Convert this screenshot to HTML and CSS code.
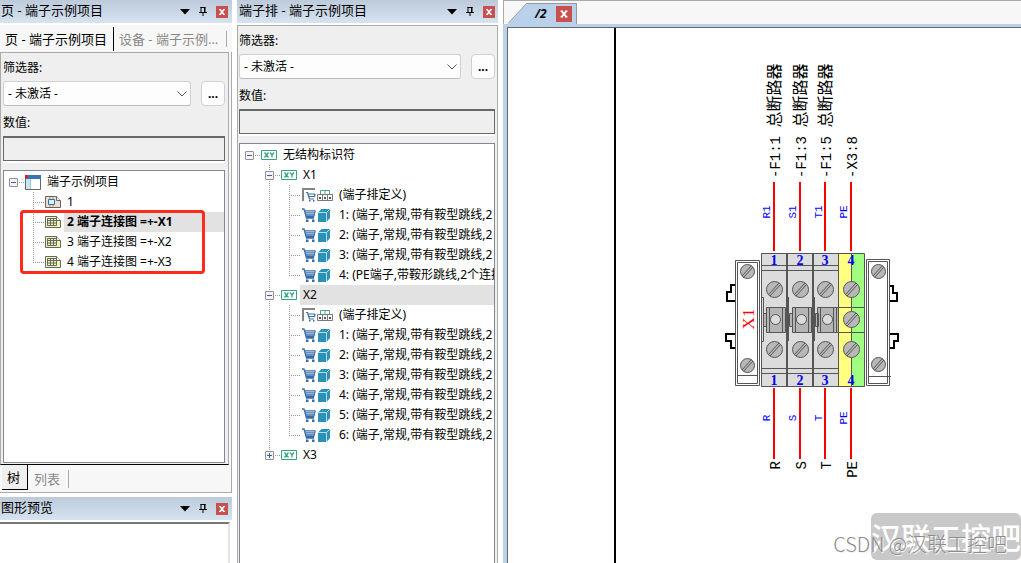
FILE: index.html
```html
<!DOCTYPE html>
<html lang="zh-CN">
<head>
<meta charset="utf-8">
<title>端子示例项目</title>
<link rel="stylesheet" href="styles.css">
</head>
<body>
<svg class="defs" aria-hidden="true">
  <symbol id="down" viewBox="0 0 10 6"><path d="M0 0h10L5 5.500z"/></symbol>
  <symbol id="pin" viewBox="0 0 8 9"><path d="M2 0v5M1.500 .500h5M0 5.500h8M4 6v3" fill="none" stroke="#000"/><path d="M5 0h1.500v5H5z"/></symbol>
  <symbol id="cross" viewBox="0 0 12 12"><path d="M4 3.500l4 5M8 3.500l-4 5" stroke="#fff" stroke-width="1.500"/><path d="M3 3.500h2M7 3.500h2M3 8.500h2M7 8.500h2" stroke="#fff"/></symbol>
  <symbol id="chev" viewBox="0 0 10 6"><path d="M.500 .500L5 5l4.500-4.500" fill="none" stroke="#555"/></symbol>
  <symbol id="project" viewBox="0 0 16 16"><path d="M.500 2.500h15v13H.500z" fill="#fff" stroke="#666"/><path d="M1 5h4v10H1z" fill="#cbe6f3"/><path d="M5.500 5v10" stroke="#9cc"/><path d="M0 1h16v4H0z" fill="#3577b5"/><path d="M0 1h3v3H0z" fill="#e81c1c"/></symbol>
  <symbol id="page" viewBox="0 0 16 12"><path d="M.500 .500h11l4 4v7H.500z" fill="#f1ddd0" stroke="#666"/><path d="M11.500 .500v4h4" fill="#fff" stroke="#666"/><path d="M3.500 3.500h6v5h-6z" fill="#d9effa" stroke="#1779b8"/><path d="M5 1v2M8 1v2M5 9v2M8 9v2" stroke="#e08540"/></symbol>
  <symbol id="diagram" viewBox="0 0 16 12"><path d="M.500 .500h11l4 4v7H.500z" fill="#f0f6b0" stroke="#666"/><path d="M11.500 .500v4h4" fill="#fff" stroke="#666"/><path d="M2.500 2.500h9v7h-9zM2.500 4.500h9M2.500 7h9M5.500 2.500v7M8.500 2.500v7" fill="none" stroke="#666"/></symbol>
  <symbol id="xy" viewBox="0 0 16 10"><path d="M.500 .500h15v9H.500z" fill="#fff" stroke="#36a57b"/><path d="M3.500 2.500l4 5M7.500 2.500l-4 5M9 2.500l2 2.500 2-2.500M11 5v2.500" fill="none" stroke="#36a57b" stroke-width="1.300"/></symbol>
  <symbol id="cart" viewBox="0 0 14 14"><path d="M0 1h2l2.500 9H12M2.500 2.800H13.500M3 4.800h10M3.600 6.800h8.800M4 8.500h8" fill="none" stroke="#386ca9" stroke-width="1.300"/><path d="M4 11.500h2.500V14H4zM10 11.500h2.500V14H10z" fill="#386ca9"/><path d="M13.200 3L12 8.500" stroke="#386ca9"/></symbol>
  <symbol id="cartdef" viewBox="0 0 14 14"><path d="M13 1H1v12" fill="none" stroke="#858585" stroke-width="2"/><path d="M4 4.500h1.500l2 6.500H12M6 6h7M6.500 8.500h6M13 6l-.500 3" fill="none" stroke="#386ca9" stroke-width="1.200"/><path d="M7 12h1.500v1.500H7zM11 12h1.500v1.500H11z" fill="#386ca9"/></symbol>
  <symbol id="strip" viewBox="0 0 16 12"><path d="M3.500 5V1.500h9V5M8 1v4" fill="none" stroke="#45ad7f"/><path d="M.500 5.500h15v6H.500zM5.500 5v6M10.500 5v6" fill="#fff" stroke="#777"/><path d="M2 8h2v2H2zM7 8h2v2H7zM12 8h2v2h-2z" fill="#555"/></symbol>
  <symbol id="cube" viewBox="0 0 12 13"><path d="M0 3.500L3.500 0H12v9l-3.500 4H0z" fill="#2b91b8"/><path d="M0 3.500h8.500V13M8.500 3.500L12 0" fill="none" stroke="#b5deec"/></symbol>
</svg>

<main class="app">
  <div class="side">
    <section class="dock">
      <header class="titlebar"><h2>页 - 端子示例项目</h2>
        <button class="tool" aria-label="菜单"><svg width="10" height="6"><use href="#down"/></svg></button>
        <button class="tool" aria-label="固定"><svg width="8" height="9"><use href="#pin"/></svg></button>
        <button class="close" aria-label="关闭"><svg width="12" height="12"><use href="#cross"/></svg></button>
      </header>
      <nav class="tabs"><button class="tab active">页 - 端子示例项目</button><button class="tab">设备 - 端子示例...</button></nav>
      <div class="frame">
        <div class="panel">
          <label for="filter1">筛选器:</label>
          <div class="filter"><span class="combo"><select id="filter1"><option>- 未激活 -</option></select><svg width="10" height="6"><use href="#chev"/></svg></span><button class="more">...</button></div>
          <label for="value1">数值:</label>
          <input class="value" id="value1" type="text">
          <ul class="tree">
            <li class="row"><span class="cell h"><button class="exp" aria-label="折叠"></button></span><svg class="icon" width="16" height="16"><use href="#project"/></svg><span class="name">端子示例项目</span></li>
            <li class="row"><span class="cell"></span><span class="cell v h"></span><svg class="icon" width="16" height="12"><use href="#page"/></svg><span class="name">1</span></li>
            <li class="group"><ul>
              <li class="row"><span class="cell"></span><span class="cell v h"></span><svg class="icon" width="16" height="12"><use href="#diagram"/></svg><span class="name picked current">2 端子连接图 =+-X1</span></li>
              <li class="row"><span class="cell"></span><span class="cell v h"></span><svg class="icon" width="16" height="12"><use href="#diagram"/></svg><span class="name">3 端子连接图 =+-X2</span></li>
              <li class="row"><span class="cell"></span><span class="cell end h"></span><svg class="icon" width="16" height="12"><use href="#diagram"/></svg><span class="name">4 端子连接图 =+-X3</span></li>
            </ul><div class="mark"></div></li>
          </ul>
        </div>
        <nav class="views"><button class="view active">树</button><button class="view">列表</button></nav>
      </div>
    </section>
    <section class="preview">
      <header class="titlebar"><h2>图形预览</h2>
        <button class="tool" aria-label="菜单"><svg width="10" height="6"><use href="#down"/></svg></button>
        <button class="tool" aria-label="固定"><svg width="8" height="9"><use href="#pin"/></svg></button>
        <button class="close" aria-label="关闭"><svg width="12" height="12"><use href="#cross"/></svg></button>
      </header>
      <div class="thumb"></div>
    </section>
  </div>

  <section class="middle">
    <header class="titlebar"><h2>端子排 - 端子示例项目</h2>
      <button class="tool" aria-label="菜单"><svg width="10" height="6"><use href="#down"/></svg></button>
      <button class="tool" aria-label="固定"><svg width="8" height="9"><use href="#pin"/></svg></button>
      <button class="close" aria-label="关闭"><svg width="12" height="12"><use href="#cross"/></svg></button>
    </header>
    <div class="panel">
      <label for="filter2">筛选器:</label>
      <div class="filter"><span class="combo"><select id="filter2"><option>- 未激活 -</option></select><svg width="10" height="6"><use href="#chev"/></svg></span><button class="more">...</button></div>
      <label for="value2">数值:</label>
      <input class="value" id="value2" type="text">
      <ul class="tree">
        <li class="row"><span class="cell h"><button class="exp" aria-label="折叠"></button></span><svg class="icon" width="16" height="10"><use href="#xy"/></svg><span class="name">无结构标识符</span></li>
        <li class="row"><span class="cell"></span><span class="cell v h"><button class="exp" aria-label="折叠"></button></span><svg class="icon" width="16" height="10"><use href="#xy"/></svg><span class="name">X1</span></li>
        <li class="row"><span class="cell"></span><span class="cell v"></span><span class="cell v h"></span><svg class="part" width="14" height="14"><use href="#cartdef"/></svg><svg class="kind" width="16" height="12"><use href="#strip"/></svg><span class="name">(端子排定义)</span></li>
        <li class="row"><span class="cell"></span><span class="cell v"></span><span class="cell v h"></span><svg class="part" width="14" height="14"><use href="#cart"/></svg><svg class="kind cube" width="12" height="13"><use href="#cube"/></svg><span class="name">1: (端子,常规,带有鞍型跳线,2</span></li>
        <li class="row"><span class="cell"></span><span class="cell v"></span><span class="cell v h"></span><svg class="part" width="14" height="14"><use href="#cart"/></svg><svg class="kind cube" width="12" height="13"><use href="#cube"/></svg><span class="name">2: (端子,常规,带有鞍型跳线,2</span></li>
        <li class="row"><span class="cell"></span><span class="cell v"></span><span class="cell v h"></span><svg class="part" width="14" height="14"><use href="#cart"/></svg><svg class="kind cube" width="12" height="13"><use href="#cube"/></svg><span class="name">3: (端子,常规,带有鞍型跳线,2</span></li>
        <li class="row"><span class="cell"></span><span class="cell v"></span><span class="cell end h"></span><svg class="part" width="14" height="14"><use href="#cart"/></svg><svg class="kind cube" width="12" height="13"><use href="#cube"/></svg><span class="name">4: (PE端子,带鞍形跳线,2个连接</span></li>
        <li class="row"><span class="cell"></span><span class="cell v h"><button class="exp" aria-label="折叠"></button></span><svg class="icon" width="16" height="10"><use href="#xy"/></svg><span class="name picked">X2</span></li>
        <li class="row"><span class="cell"></span><span class="cell v"></span><span class="cell v h"></span><svg class="part" width="14" height="14"><use href="#cartdef"/></svg><svg class="kind" width="16" height="12"><use href="#strip"/></svg><span class="name">(端子排定义)</span></li>
        <li class="row"><span class="cell"></span><span class="cell v"></span><span class="cell v h"></span><svg class="part" width="14" height="14"><use href="#cart"/></svg><svg class="kind cube" width="12" height="13"><use href="#cube"/></svg><span class="name">1: (端子,常规,带有鞍型跳线,2</span></li>
        <li class="row"><span class="cell"></span><span class="cell v"></span><span class="cell v h"></span><svg class="part" width="14" height="14"><use href="#cart"/></svg><svg class="kind cube" width="12" height="13"><use href="#cube"/></svg><span class="name">2: (端子,常规,带有鞍型跳线,2</span></li>
        <li class="row"><span class="cell"></span><span class="cell v"></span><span class="cell v h"></span><svg class="part" width="14" height="14"><use href="#cart"/></svg><svg class="kind cube" width="12" height="13"><use href="#cube"/></svg><span class="name">3: (端子,常规,带有鞍型跳线,2</span></li>
        <li class="row"><span class="cell"></span><span class="cell v"></span><span class="cell v h"></span><svg class="part" width="14" height="14"><use href="#cart"/></svg><svg class="kind cube" width="12" height="13"><use href="#cube"/></svg><span class="name">4: (端子,常规,带有鞍型跳线,2</span></li>
        <li class="row"><span class="cell"></span><span class="cell v"></span><span class="cell v h"></span><svg class="part" width="14" height="14"><use href="#cart"/></svg><svg class="kind cube" width="12" height="13"><use href="#cube"/></svg><span class="name">5: (端子,常规,带有鞍型跳线,2</span></li>
        <li class="row"><span class="cell"></span><span class="cell v"></span><span class="cell end h"></span><svg class="part" width="14" height="14"><use href="#cart"/></svg><svg class="kind cube" width="12" height="13"><use href="#cube"/></svg><span class="name">6: (端子,常规,带有鞍型跳线,2</span></li>
        <li class="row"><span class="cell"></span><span class="cell end h"><button class="exp plus" aria-label="展开"></button></span><svg class="icon" width="16" height="10"><use href="#xy"/></svg><span class="name">X3</span></li>
      </ul>
    </div>
  </section>

  <section class="editor">
    <nav class="doctabs">
      <div class="doctab">
        <svg class="slope" width="20" height="21" viewBox="0 0 20 21"><path d="M0 21L19 .500h1V21z" fill="#b9d1ea"/><path d="M0 20.500L18.500 .500H20" fill="none" stroke="#999"/></svg>
        <button class="doc">/2</button><button class="close big" aria-label="关闭"><svg width="14" height="14" viewBox="0 0 12 12"><use href="#cross"/></svg></button>
      </div>
    </nav>
    <div class="canvas">
      <svg class="drawing" width="513" height="535" viewBox="508 28 513 535" role="img" aria-label="端子连接图">
        <defs>
          <g id="screw"><circle r="8" fill="#b8b8b8" stroke="#555"/><path d="M-6 5L4.500-6.500M-4.500 6.500L6-5" stroke="#555"/></g>
          <g id="bolt"><circle r="7" fill="#b8b8b8" stroke="#555"/><path d="M-5.500 4.500L4-6M-4 6L5.500-4.500" stroke="#555"/></g>
        </defs>
        <path d="M615 28V563" stroke="#000" stroke-width="2"/>
        <g stroke="#f00" stroke-width="2"><path d="M774 182v69M800 182v69M825 182v69M851 182v69M774 388v71M800 388v71M825 388v71M851 388v71"/></g>
        <g fill="none" stroke="#000" stroke-width="2">
          <path d="M737 285h-6v7h-4v9h8M736 334h-10v7h5v7h6M890 286h3v7h4v8h-7M890 334h8v7h-4v7h-4"/>
        </g>
        <g fill="#fff" stroke="#555">
          <path d="M735.500 260.500h24v125h-24zM737.500 262.500h20v121h-20zM737.500 375.500h20M866.500 259.500h23v126h-23zM868.500 261.500h19v122h-19zM869 376.500h22"/>
        </g>
        <use href="#bolt" x="747.500" y="271.500"/><use href="#bolt" x="747.500" y="365.500"/><use href="#bolt" x="878.500" y="271.500"/><use href="#bolt" x="878.500" y="364.500"/>
        <path d="M761.500 253.500h77v133h-77z" fill="#dcdcdc"/>
        <path d="M838.500 253.500h13v133h-13z" fill="#ffff80"/><path d="M851.500 253.500h13v133h-13z" fill="#a0ff80"/>
        <g fill="none" stroke="#555"><path d="M761.500 253.500h103v133h-103zM761.500 265.500h77M761.500 270.500h77M761.500 368.500h77M761.500 373.500h77M838.500 253v133M851.500 253v133M838.500 307.500h26M838.500 332.500h26"/>
          <path d="M787 253v133M813 253v133" stroke-width="2"/>
          <path d="M787.500 297v44M813.500 297v44" stroke-width="3"/><path d="M761.500 297.500h2v44h-2z"/></g>
        <g fill="#b4b4b4" stroke="#555">
          <path d="M763.500 313.500h3v13h-3zM789.500 313.500h3v13h-3zM815.500 313.500h3v13h-3zM766.500 307.500h19v25h-19zM792.500 307.500h19v25h-19zM817.500 307.500h21v25h-21z"/>
          <path d="M769.500 307v25M782.500 307v25M795.500 307v25M808.500 307v25M820.500 307v25M833.500 307v25M836.500 307v25"/>
          <g fill="#dcdcdc"><circle cx="775.500" cy="319.500" r="5"/><circle cx="801.500" cy="319.500" r="5"/><circle cx="827.500" cy="319.500" r="5"/></g>
        </g>
        <use href="#screw" x="774.500" y="289.500"/><use href="#screw" x="800.500" y="289.500"/><use href="#screw" x="825.500" y="289.500"/><use href="#screw" x="851.500" y="289.500"/>
        <use href="#screw" x="851.500" y="319.500"/>
        <use href="#screw" x="774.500" y="349.500"/><use href="#screw" x="800.500" y="349.500"/><use href="#screw" x="825.500" y="349.500"/><use href="#screw" x="851.500" y="349.500"/>
        <g class="num"><text x="774" y="265">1</text><text x="800" y="265">2</text><text x="825" y="265">3</text><text x="851" y="265">4</text><text x="774" y="385">1</text><text x="800" y="385">2</text><text x="825" y="385">3</text><text x="851" y="385">4</text></g>
        <g class="target">
          <text transform="translate(780 178) rotate(-90)">-F1:1 <tspan class="han">总断路器</tspan></text>
          <text transform="translate(806 178) rotate(-90)">-F1:3 <tspan class="han">总断路器</tspan></text>
          <text transform="translate(831 178) rotate(-90)">-F1:5 <tspan class="han">总断路器</tspan></text>
          <text transform="translate(857 178) rotate(-90)">-X3:8</text>
          <g text-anchor="end"><text transform="translate(780 461) rotate(-90)">R</text><text transform="translate(806 461) rotate(-90)">S</text><text transform="translate(831 461) rotate(-90)">T</text><text transform="translate(857 461) rotate(-90)">PE</text></g>
        </g>
        <g class="wire"><text transform="translate(770 212) rotate(-90)">R1</text><text transform="translate(796 212) rotate(-90)">S1</text><text transform="translate(822 212) rotate(-90)">T1</text><text transform="translate(847 212) rotate(-90)">PE</text>
          <text transform="translate(770 418) rotate(-90)">R</text><text transform="translate(796 418) rotate(-90)">S</text><text transform="translate(822 418) rotate(-90)">T</text><text transform="translate(847 418) rotate(-90)">PE</text></g>
        <text class="strip" transform="translate(754 319) rotate(-90)">X1</text>
      </svg>
    </div>
  </section>
</main>
<div class="stamp">汉联工控吧</div>
<div class="credit">CSDN @汉联工控吧</div>
</body>
</html>
```

FILE: styles.css
```css
* { box-sizing: border-box; }
body {
  margin: 0;
  height: 100vh;
  overflow: hidden;
  position: relative;
  background: #fff;
  color: #000;
  font: 12px/20px "Noto Sans", "Noto Sans CJK SC", sans-serif;
}
button, select, input { font: inherit; color: inherit; margin: 0; padding: 0; border-radius: 0; }
button { border: 0; background: none; }
ul { list-style: none; margin: 0; padding: 0; }
svg { display: block; flex: none; }
.defs { position: absolute; width: 0; height: 0; }

.app { display: flex; gap: 5px; height: 100%; }
.side { flex: 0 0 232px; min-width: 0; display: flex; flex-direction: column; gap: 4px; }
.middle { flex: 0 0 261px; min-width: 0; display: flex; flex-direction: column; }
.editor { flex: 1; min-width: 0; display: flex; flex-direction: column; }

.titlebar {
  flex: none;
  display: flex;
  align-items: center;
  height: 23px;
  padding: 0 4px 0 1px;
  background: linear-gradient(#bccada, #d6e3f0);
}
.middle .titlebar { padding-left: 2px; padding-right: 3px; }
.titlebar h2 { flex: 1; align-self: flex-start; margin: 0; font-size: 13px; font-weight: 400; line-height: 20px; white-space: nowrap; }
.tool { display: flex; margin-right: 9px; }
.close { display: flex; background: #c8504f; }

.dock { display: flex; flex-direction: column; height: 493px; }
.tabs { display: flex; align-items: center; margin-top: 2px; height: 27px; background: #f7f7f7; font-size: 13px; white-space: nowrap; }
.tab { height: 24px; padding: 0 5px; color: #888; border-right: 1px solid #aaa; }
.tab:last-child { line-height: 16px; height: 16px; padding-right: 8px; }
.tab.active { color: #000; border-right-color: #000; padding-right: 6px; }
.frame { flex: 1; min-height: 0; display: flex; flex-direction: column; padding-right: 2px; border: 1px solid #aaa; border-width: 0 1px 1px 0; background: #f7f7f7; }

.panel { flex: 1; min-height: 0; display: flex; flex-direction: column; padding: 4px 3px 0 2px; border: 1px solid #aaa; border-width: 1px 1px 0 1px; background: #efefef; }
.frame .panel { padding-bottom: 1px; border-bottom: 1px solid #000; }
.middle .panel { margin-top: 2px; padding: 4px 2px 0 1px; }
.panel label { height: 24px; line-height: 22px; }
.filter { display: flex; gap: 10px; height: 25px; }
.combo { flex: 1; min-width: 0; position: relative; display: flex; }
.combo select { width: 100%; appearance: none; padding: 0 20px 0 4px; border: 1px solid #d0d0d0; border-bottom-color: #bbb; border-radius: 3px; background: #fdfdfd; }
.combo svg { position: absolute; right: 4px; top: 10px; pointer-events: none; }
.more { width: 24px; border: 1px solid #d0d0d0; border-radius: 4px; background: #fdfdfd; font-weight: 700; line-height: 20px; }
.filter + label { margin-top: 6px; }
.value { flex: none; width: 100%; height: 25px; background: #efefef; border: 2px solid #696969; border-width: 2px 1px 1px 1px; outline: 0; box-shadow: 0 2px #fff; margin-bottom: 9px; }

.tree { flex: 1; min-height: 0; overflow: hidden; padding-top: 1px; background: #fff; border: 1px solid #828790; }
.middle .tree { border-bottom: 0; }
.row { display: flex; align-items: center; height: 20px; white-space: nowrap; }
.cell { flex: none; position: relative; align-self: stretch; width: 20px; }
.v::before, .end::before { content: ""; position: absolute; left: 9px; top: 0; bottom: 0; width: 1px; background: repeating-linear-gradient(#999 0 1px, transparent 1px 2px); }
.end::before { bottom: 9px; }
.h::after { content: ""; position: absolute; left: 9px; right: 0; top: 10px; height: 1px; background: repeating-linear-gradient(90deg, #999 0 1px, transparent 1px 2px); }
.exp { position: absolute; z-index: 1; left: 5px; top: 6px; width: 9px; height: 9px; border: 1px solid #919191; border-radius: 1px; background: linear-gradient(#3a5fa8, #3a5fa8) center / 5px 1px no-repeat, #f4f4f4; }
.exp.plus { background: linear-gradient(#3a5fa8, #3a5fa8) center / 5px 1px no-repeat, linear-gradient(#3a5fa8, #3a5fa8) center / 1px 5px no-repeat, #f4f4f4; }
.icon { margin: 0 3px 0 1px; }
.part { margin: 0 1px 0 2px; }
.kind { margin-right: 3px; }
.kind.cube { margin: 0 6px 0 1px; }
.name { flex: 1; padding-left: 3px; line-height: 20px; }
.picked { background: #e2e2e2; }
.current { font-weight: 700; }
.group { position: relative; }
.mark { position: absolute; left: 16px; top: -2px; width: 185px; height: 64px; border: 3px solid #ff2a1a; border-radius: 4px; }

.views { flex: none; display: flex; align-items: center; height: 27px; font-size: 13px; }
.view { color: #888; padding: 0 8px 0 6px; line-height: 18px; border-right: 1px solid #aaa; }
.view.active { color: #000; height: 25px; align-self: flex-start; margin-left: 2px; padding: 0 7px 0 5px; border: solid #000; border-width: 0 1px 1px 0; background: #efefef; }

.preview { flex: 1; min-height: 0; display: flex; flex-direction: column; }
.thumb { flex: 1; margin: 2px 2px 0 0; border-top: 2px solid #777; border-right: 2px solid #e4e4e4; }

.doctabs { flex: none; height: 24px; padding: 2px 0 0 4px; background: #f7f7f7; border-top: 1px solid #aaa; border-left: 1px solid #aaa; }
.doctab { display: flex; width: 69px; height: 21px; }
.doc { flex: 1; height: 21px; background: #b9d1ea; border-top: 1px solid #999; padding-left: 7px; text-align: left; font-weight: 700; font-style: italic; line-height: 18px; }
.close.big { width: 24px; height: 21px; padding: 3px 0 0 4px; background: linear-gradient(#c8504f, #c8504f) 3px 2px / 16px 16px no-repeat, #b9d1ea; border: 1px solid #999; border-width: 1px 1px 0 0; }
.canvas { flex: 1; min-height: 0; overflow: hidden; padding: 1px 0 0 1px; background: #fff; border-left: 4px solid #b9d1ea; border-top: 3px solid #b9d1ea; box-shadow: inset 1px 1px #666; }

.target { font: 14px "Liberation Mono", "Noto Sans CJK SC", monospace; }
.han { font-family: "Noto Sans CJK SC", sans-serif; font-size: 16px; }
.wire { font: 11px "Liberation Mono", monospace; fill: #00f; text-anchor: middle; }
.num { font: bold 14px "Liberation Serif", serif; fill: #00f; text-anchor: middle; }
.strip { font: 17px "Liberation Serif", serif; fill: #f00; text-anchor: middle; }

.stamp { position: absolute; right: 0; bottom: 3px; width: 150px; height: 47px; border-radius: 6px; background: #c9c9c9; color: #fff; text-align: center; font: 500 30px/46px "Noto Sans CJK SC", sans-serif; white-space: nowrap; }
.credit { position: absolute; right: 14px; bottom: 5px; color: #8c8c8c; text-shadow: 1px 1px #f4f4f4; font: 300 20px/28px "Noto Sans CJK SC", sans-serif; white-space: nowrap; }
```
